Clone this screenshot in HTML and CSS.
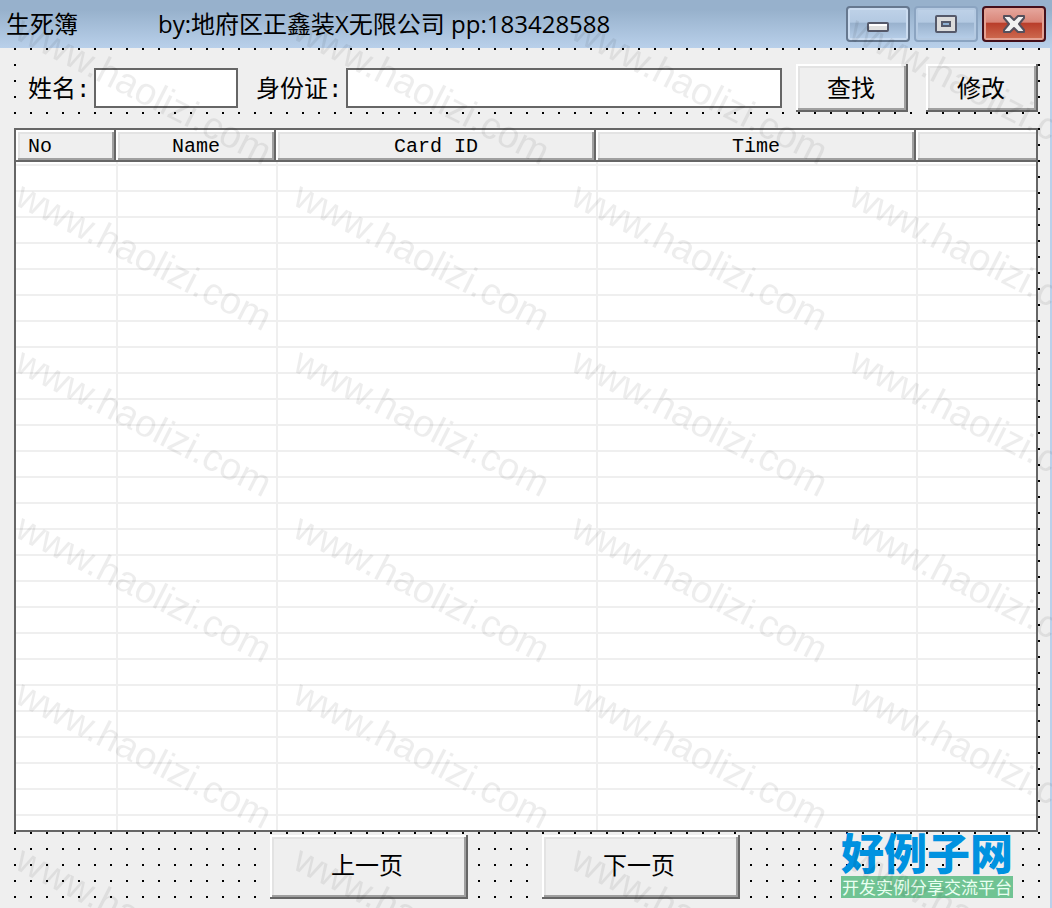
FILE: index.html
```
<!DOCTYPE html>
<html lang="zh-CN">
<head>
    <meta charset="UTF-8">
    <meta name="viewport" content="width=device-width, initial-scale=1.0">
    <title>生死簿</title>
    <link rel="stylesheet" href="styles.css">
</head>
<body>
    <div class="window">
        <header class="titlebar">
            <h1 class="title"><span>生死簿</span><span>by:地府区正鑫装X无限公司 pp:183428588</span></h1>
            <div class="controls">
                <button class="control" aria-label="Minimize">
                    <svg class="icon-min" width="22" height="10" viewBox="0 0 22 10"><rect x="1" y="1" width="20" height="8" rx="1" fill="#e0e0e0" stroke="#55596a" stroke-width="2"/><path d="M2 3h18" stroke="#fff" stroke-width="2"/></svg>
                </button>
                <button class="control control-max" aria-label="Maximize">
                    <svg width="22" height="18" viewBox="0 0 22 18"><rect x="1" y="1" width="20" height="16" rx="1" fill="#dcdcdc" stroke="#55596a" stroke-width="2"/><rect x="7" y="7" width="8" height="4" fill="#8fb0d2" stroke="#55596a" stroke-width="2"/></svg>
                </button>
                <button class="control control-close" aria-label="Close">
                    <svg width="22" height="18" viewBox="0 0 22 18"><path d="M1 1h6l4 4 4-4h6v2l-5 6 5 6v2h-6l-4-4-4 4H1v-2l5-6-5-6z" fill="#f1f1f1" stroke="#55505c" stroke-width="2" stroke-linejoin="round"/></svg>
                </button>
            </div>
        </header>

        <main class="form">
            <div class="toolbar">
                <label class="label-name" for="name">姓名:</label>
                <input class="input-name" type="text" id="name">
                <label class="label-card" for="card">身份证:</label>
                <input class="input-card" type="text" id="card">
                <button class="button">查找</button>
                <button class="button button-edit">修改</button>
            </div>

            <div class="list">
                <table class="records">
                    <colgroup>
                        <col class="col-no">
                        <col class="col-name">
                        <col class="col-wide">
                        <col class="col-wide">
                        <col>
                    </colgroup>
                    <thead>
                        <tr>
                            <th class="left">No</th>
                            <th>Name</th>
                            <th>Card ID</th>
                            <th>Time</th>
                            <th></th>
                        </tr>
                    </thead>
                    <tbody>
                        <tr>
                            <td></td>
                            <td></td>
                            <td></td>
                            <td></td>
                            <td></td>
                        </tr>
                    </tbody>
                </table>
            </div>

            <div class="pager">
                <button class="button button-page">上一页</button>
                <button class="button button-page">下一页</button>
                <div class="logo">
                    <div class="logo-name">好例子网</div>
                    <div class="logo-slogan">开发实例分享交流平台</div>
                </div>
            </div>
        </main>

        <svg class="watermark" aria-hidden="true">
            <defs>
                <pattern id="mark" x="8" y="176" width="278" height="166" patternUnits="userSpaceOnUse">
                    <text class="mark-text" transform="translate(5 28) rotate(27)">www.haolizi.com</text>
                </pattern>
            </defs>
            <rect width="100%" height="100%" fill="url(#mark)"/>
        </svg>
    </div>
</body>
</html>
```
FILE: styles.css
```
* {
    box-sizing: border-box;
}
body {
    margin: 0;
    font-family: "Noto Sans CJK SC", sans-serif;
    font-size: 24px;
    color: #000;
    background: #efefef;
}
button, input {
    font: inherit;
    color: inherit;
    margin: 0;
    padding: 0;
}
.window {
    position: relative;
    display: flex;
    flex-direction: column;
    min-height: 100vh;
}

/* title bar */
.titlebar {
    display: flex;
    justify-content: space-between;
    align-items: center;
    height: 48px;
    padding: 0 6px;
    background: linear-gradient(#97b1cc 20%, #b9d0ea);
}
.title {
    display: flex;
    gap: 80px;
    margin: 0;
    font-family: "Open Sans", "Noto Sans CJK SC", sans-serif;
    font-size: 24px;
    font-weight: 400;
    line-height: 48px;
    white-space: nowrap;
}
.controls {
    display: flex;
    gap: 4px;
}
.control {
    display: flex;
    justify-content: center;
    align-items: center;
    width: 64px;
    height: 36px;
    border: 2px solid #66788f;
    border-radius: 4px;
    background: linear-gradient(#bfd2e8, #b3c9e2 45%, #98b1cd 46%, #b9d0ea);
    box-shadow: inset 0 0 0 2px #cbdcf0;
}
.icon-min {
    margin-top: 6px;
}
.control-max {
    border-color: #8ba4c1;
    box-shadow: inset 0 0 0 2px #b5cae2;
}
.control-close {
    border-color: #45101a;
    background: linear-gradient(#e6a79e, #d98578 45%, #b83c29 46%, #cf6d52);
    box-shadow: inset 0 0 0 2px #e5a293;
}

/* form surface with the designer grid */
.form {
    flex: 1;
    display: flex;
    flex-direction: column;
    padding: 2px 12px 0 14px;
    border-right: 2px solid #b9d0ea;
    background: conic-gradient(from 270deg at 2px 2px, #000 90deg, transparent 0) 14px 0 / 16px 16px;
}
.toolbar {
    display: flex;
    align-items: center;
    margin: 0 0 16px 2px;
    padding: 14px 0 0 12px;
    background: #efefef;
}
.toolbar label {
    flex: none;
    padding-top: 6px;
    font-family: "Liberation Mono", "Noto Sans CJK SC", monospace;
    line-height: 40px;
}
.label-name {
    width: 66px;
}
.label-card {
    width: 90px;
    margin-left: 18px;
}
.toolbar input {
    height: 40px;
    padding: 0 6px;
    border: 2px solid #666;
    border-radius: 0;
    background: #fff;
}
.input-name {
    width: 144px;
}
.input-card {
    flex: 1;
    min-width: 0;
    margin-right: 14px;
}
.button {
    width: 112px;
    height: 48px;
    padding: 0 2px 4px 0;
    border: none;
    background: #efefef;
    box-shadow: inset -2px -2px #666, inset 2px 2px #fff, inset -4px -4px #a0a0a0, inset 4px 4px #e3e3e3;
}
.button-edit {
    margin-left: 18px;
}

/* records list */
.list {
    flex: 1;
    display: flex;
    border: 2px solid #666;
    background: #fff;
}
.records {
    width: 100%;
    table-layout: fixed;
    border-collapse: separate;
    border-spacing: 0;
}
.col-no {
    width: 100px;
}
.col-name {
    width: 160px;
}
.col-wide {
    width: 320px;
}
.records th {
    height: 32px;
    padding: 2px 12px 0;
    font-family: "Liberation Mono", monospace;
    font-size: 20px;
    font-weight: 400;
    line-height: 30px;
    background: #efefef;
    box-shadow: inset -2px -2px #666, inset 2px 2px #fff, inset -4px -4px #a0a0a0, inset 4px 4px #e3e3e3;
}
.records th.left {
    text-align: left;
}
.records th:last-child {
    box-shadow: inset 0 -2px #666, inset 2px 2px #fff, inset 0 -4px #a0a0a0, inset 4px 4px #e3e3e3;
}
.records td {
    padding: 0;
    border-left: 2px solid #efefef;
    background: linear-gradient(#efefef 2px, transparent 2px) 0 2px / 100% 26px;
}
.records td:first-child {
    border-left: none;
}

/* bottom row */
.pager {
    display: flex;
    align-items: flex-start;
    height: 76px;
    padding: 3px 25px 0 256px;
}
.button-page {
    width: 198px;
    height: 64px;
    margin-right: 74px;
    padding: 0 4px 8px 0;
}
.button-page + .button-page {
    margin-right: auto;
}
.logo {
    width: 172px;
    white-space: nowrap;
}
.logo-name {
    margin-bottom: 9px;
    font-size: 43px;
    font-weight: 900;
    line-height: 32px;
    color: #0092e0;
}
.logo-slogan {
    font-size: 17px;
    line-height: 22px;
    text-align: center;
    color: #e9fff1;
    background: #70c393;
}

.watermark {
    position: absolute;
    top: 0;
    left: 0;
    width: 100%;
    height: 100%;
    pointer-events: none;
}
.mark-text {
    font-family: "Liberation Sans", sans-serif;
    font-size: 38px;
    fill: rgba(0, 0, 0, 0.07);
}
```
